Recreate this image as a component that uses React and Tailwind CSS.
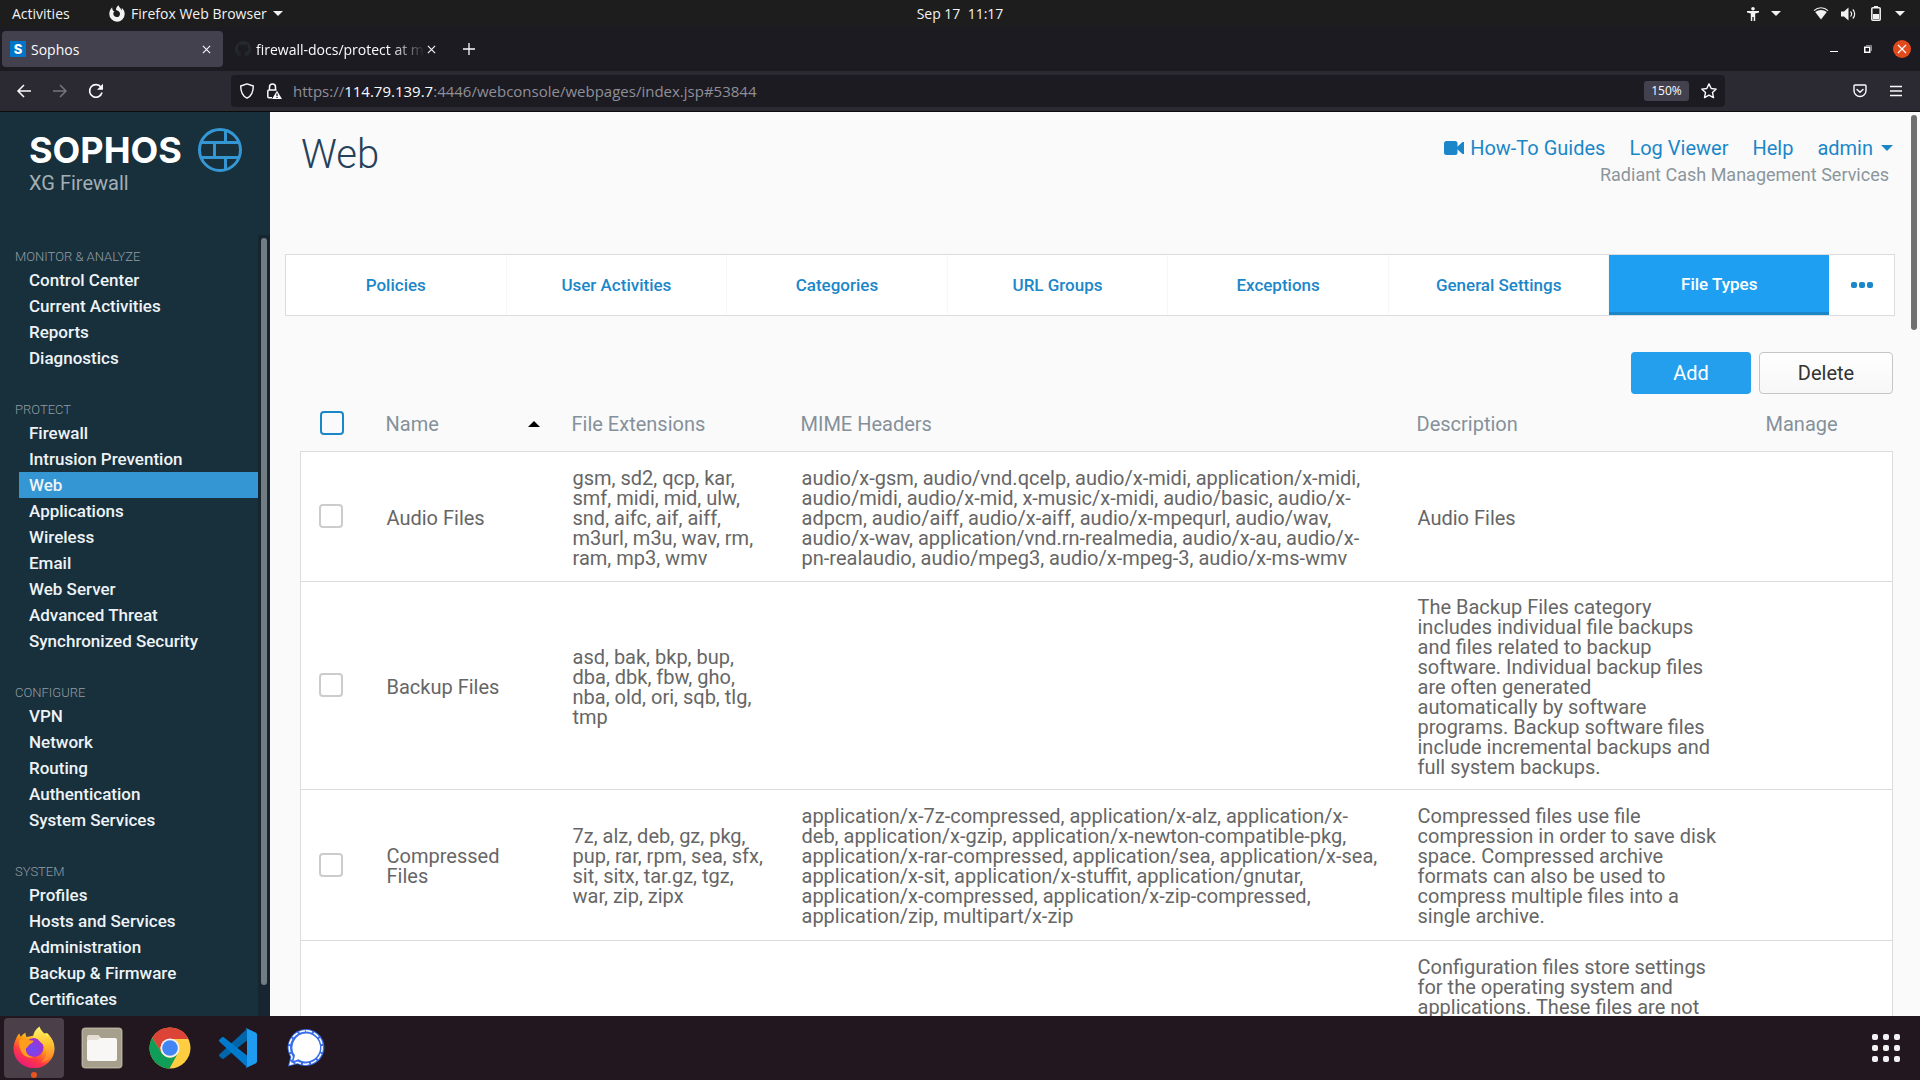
import React from "react";

const UI = "font-['Open_Sans','Noto_Sans',sans-serif]";

function Caret({ className }) {
  return (
    <svg viewBox="0 0 10 5" className={className} fill="currentColor" aria-hidden="true">
      <path d="M0 0h10L5 5z" />
    </svg>
  );
}

function FirefoxSymbol() {
  return (
    <svg viewBox="0 0 16 17" className="h-[17px] w-4" aria-hidden="true">
      <path fill="#f2f2f2" d="M3.2 2.2C1.400 4 .3 6.300.3 8.900A7.700 7.700 0 0 0 15.700 9c0-2.700-1.200-4.800-3-6 .2 1 .2 1.800 0 2.500C12 3.200 9.800 2.400 9.700.2 7.600 1.300 7 3.400 7 4.900c1.900.3 3.900 1.500 4 3.800.1 2-1.400 3.400-3.200 3.400-2 0-3.500-1.400-3.500-3.300 0-1 .5-1.700 1.200-2.100C4 6 3.100 4.400 3.200 2.200z" />
    </svg>
  );
}

function TopBar() {
  return (
    <header className={`${UI} grid h-[27px] shrink-0 grid-cols-3 items-center bg-[#1d1d1d] text-sm text-[#f2f2f2]`}>
      <div className="flex items-center pl-3">
        <button className="w-[62px] text-left">Activities</button>
        <button className="ml-[35px] flex items-center gap-1.5 whitespace-nowrap">
          <FirefoxSymbol />
          Firefox Web Browser
          <Caret className="h-[5px] w-2.5" />
        </button>
      </div>
      <div className="text-center">Sep 17&nbsp; 11:17</div>
      <div className="flex items-center justify-end pr-[15px]">
        <svg viewBox="0 0 12 14" className="h-3.5 w-3" fill="currentColor" aria-hidden="true">
          <circle cx="6" cy="1.800" r="1.800" />
          <path d="M0 4h12v1.500L8.200 6.500V14H6.700v-4H5.300v4H3.800V6.500L0 5.500z" />
        </svg>
        <Caret className="ml-3 h-[5px] w-2.5" />
        <svg viewBox="0 0 16 13" className="ml-8 h-[13px] w-4" aria-hidden="true">
          <path d="M1 3.600C5-.2 11-.2 15 3.600" fill="none" stroke="currentColor" strokeWidth="1.200" />
          <path d="M2.200 5C5.500 2.200 10.500 2.200 13.800 5L8 12.500z" fill="currentColor" />
        </svg>
        <svg viewBox="0 0 16 14" className="ml-3 h-3.5 w-4" aria-hidden="true">
          <path d="M0 4.500h3L7.500.5v13L3 9.500H0z" fill="currentColor" />
          <path d="M9.500 4.500c1.300 1.400 1.300 3.600 0 5M11.800 2.500c2.500 2.500 2.500 6.500 0 9" fill="none" stroke="currentColor" strokeWidth="1.200" />
        </svg>
        <svg viewBox="0 0 10 15" className="ml-3.5 h-[15px] w-2.5" aria-hidden="true">
          <rect x=".8" y="1.800" width="8.400" height="12.400" rx="1" fill="none" stroke="currentColor" strokeWidth="1.500" />
          <path d="M3 0h4v2H3zM2 8h6v5H2z" fill="currentColor" />
        </svg>
        <Caret className="ml-3.5 h-[5px] w-2.5" />
      </div>
    </header>
  );
}

function Cross({ className }) {
  return (
    <svg viewBox="0 0 10 10" className={className} stroke="currentColor" strokeWidth="1.200" aria-hidden="true">
      <path d="M1 1l8 8M9 1L1 9" />
    </svg>
  );
}

function TabStrip() {
  return (
    <div className={`${UI} flex h-11 shrink-0 items-center bg-[#1c1b22] pl-0.5 text-sm text-[#fbfbfe]`}>
      <div className="flex h-9 w-[221px] items-center rounded bg-[#42414d] pr-3 pl-2">
        <span className="flex size-4 items-center justify-center bg-[#0075c9] font-['Inter',sans-serif] text-[13px] leading-4 font-extrabold text-white">S</span>
        <span className="ml-[5px] flex-1 pt-0.5">Sophos</span>
        <button aria-label="Close Sophos tab"><Cross className="size-[9px]" /></button>
      </div>
      <div className="ml-3 flex h-9 w-[204px] items-center">
        <svg viewBox="0 0 16 16" className="size-4 shrink-0" fill="#24292e" aria-hidden="true">
          <path d="M8 0a8 8 0 0 0-2.530 15.590c.4.070.55-.17.55-.38v-1.340c-2.220.48-2.690-1.070-2.690-1.070-.36-.92-.89-1.170-.89-1.170-.73-.5.050-.49.050-.49.810.060 1.230.83 1.230.83.720 1.230 1.880.87 2.340.67.070-.52.280-.87.510-1.070-1.780-.2-3.640-.89-3.640-3.950 0-.87.310-1.590.82-2.150-.08-.2-.36-1.020.080-2.120 0 0 .67-.21 2.200.82a7.600 7.600 0 0 1 4 0c1.530-1.040 2.200-.82 2.200-.82.44 1.100.16 1.920.080 2.120.51.56.82 1.270.82 2.150 0 3.070-1.870 3.750-3.650 3.950.29.25.54.73.54 1.480v2.190c0 .21.150.46.550.38A8 8 0 0 0 8 0z" />
        </svg>
        <span className="ml-[5px] w-[169px] overflow-hidden mask-r-from-80% pt-0.5 whitespace-nowrap">firewall-docs/protect at main</span>
        <button className="ml-0.5" aria-label="Close firewall-docs tab"><Cross className="size-[9px]" /></button>
      </div>
      <button className="ml-6" aria-label="New tab">
        <svg viewBox="0 0 12 12" className="size-3" stroke="currentColor" strokeWidth="1.300" aria-hidden="true"><path d="M6 0v12M0 6h12" /></svg>
      </button>
      <div className="ml-auto flex items-center pr-[9px]">
        <button aria-label="Minimize" className="mt-1 h-px w-2 bg-white" />
        <button aria-label="Restore" className="ml-[26px]">
          <svg viewBox="0 0 8 8" className="size-2" fill="none" aria-hidden="true">
            <path d="M2 .5h5.500V6" stroke="#8a8a90" />
            <rect x=".75" y="2.250" width="5" height="5" stroke="#fff" strokeWidth="1.500" />
          </svg>
        </button>
        <button aria-label="Close window" className="ml-[21px] flex size-[18px] items-center justify-center rounded-full bg-[#e2491b] text-white">
          <Cross className="size-2.5" />
        </button>
      </div>
    </div>
  );
}

function Toolbar() {
  return (
    <div className={`${UI} flex h-[41px] shrink-0 items-center border-b border-[#0c0c0d] bg-[#2b2a33] text-[#fbfbfe]`}>
      <div className="flex w-[231px] shrink-0 items-center gap-5 pl-4">
        {[
          ["Back", "M15 8H2M8 2L2 8l6 6", ""],
          ["Forward", "M1 8h13M8 2l6 6-6 6", "text-[#75747c]"],
        ].map(([label, d, tone]) => (
          <button key={label} aria-label={label} className={tone}>
            <svg viewBox="0 0 16 16" className="size-4" fill="none" stroke="currentColor" strokeWidth="1.500" aria-hidden="true"><path d={d} /></svg>
          </button>
        ))}
        <button aria-label="Reload">
          <svg viewBox="0 0 16 16" className="size-4" aria-hidden="true">
            <path d="M14 9.500A6.300 6.300 0 1 1 13 4.200" fill="none" stroke="currentColor" strokeWidth="1.600" />
            <path d="M15 .8v6H9z" fill="currentColor" />
          </svg>
        </button>
      </div>
      <div className="flex h-8 flex-1 items-center rounded bg-[#1c1b22] pr-2 pl-2">
        <svg viewBox="0 0 16 16" className="size-4" fill="none" stroke="currentColor" strokeWidth="1.400" aria-hidden="true">
          <path d="M8 .9L14.300 3c0 5.500-1.500 10-6.300 12.200C3.200 13 1.700 8.500 1.700 3z" strokeLinejoin="round" />
        </svg>
        <svg viewBox="0 0 16 16" className="ml-[11px] size-4" aria-hidden="true">
          <path d="M6 14.800H3a1.200 1.200 0 0 1-1.200-1.200V8.200A1.200 1.200 0 0 1 3 7h7.500M3.500 7V4a3 3 0 0 1 6 0v3" fill="none" stroke="currentColor" strokeWidth="1.500" />
          <path d="M11 7.800L16 16H6z" fill="currentColor" />
          <path d="M11 10.500v2.700M11 14v1" stroke="#1c1b22" strokeWidth="1.300" />
        </svg>
        <div className="ml-[11px] flex-1 text-[15px] leading-5 text-[#8f8f98]">
          https://<span className="text-[#fbfbfe]">114.79.139.7</span>:4446/webconsole/webpages/index.jsp#53844
        </div>
        <button className="h-5 w-[45px] rounded-[3px] bg-[#42414d] text-xs">150%</button>
        <button aria-label="Bookmark" className="ml-3">
          <svg viewBox="0 0 16 16" className="size-4" fill="none" stroke="currentColor" strokeWidth="1.400" strokeLinejoin="round" aria-hidden="true">
            <path d="M8 .9l2.200 4.600 5 .6-3.700 3.500 1 5L8 12.200l-4.500 2.400 1-5L.8 6.100l5-.6z" />
          </svg>
        </button>
      </div>
      <div className="flex w-[195px] shrink-0 items-center justify-end gap-[23px] pr-[18px]">
        <button aria-label="Save to Pocket">
          <svg viewBox="0 0 14 14" className="size-3.5" fill="none" stroke="currentColor" strokeWidth="1.400" strokeLinecap="round" strokeLinejoin="round" aria-hidden="true">
            <path d="M2 1h10a1 1 0 0 1 1 1v4.500a6 6 0 0 1-12 0V2a1 1 0 0 1 1-1zM4 5.500l3 2.800 3-2.800" />
          </svg>
        </button>
        <button aria-label="Menu">
          <svg viewBox="0 0 12 12" className="size-3" stroke="currentColor" strokeWidth="1.300" aria-hidden="true"><path d="M0 1.500h12M0 6h12M0 10.500h12" /></svg>
        </button>
      </div>
    </div>
  );
}

const NAV = [
  ["MONITOR & ANALYZE", ["Control Center", "Current Activities", "Reports", "Diagnostics"]],
  ["PROTECT", ["Firewall", "Intrusion Prevention", "Web", "Applications", "Wireless", "Email", "Web Server", "Advanced Threat", "Synchronized Security"]],
  ["CONFIGURE", ["VPN", "Network", "Routing", "Authentication", "System Services"]],
  ["SYSTEM", ["Profiles", "Hosts and Services", "Administration", "Backup & Firmware", "Certificates"]],
];

function Sidebar() {
  return (
    <aside className="flex w-[270px] shrink-0 flex-col bg-[#182f3c]">
      <div className="h-[123px] shrink-0 pt-[15px] pl-[29px]">
        <div className="flex items-center gap-[15px]">
          <span className="w-[154px] font-['Inter',sans-serif] text-4xl leading-[46px] font-bold whitespace-nowrap text-white">SOPHOS</span>
          <svg viewBox="0 0 44 44" className="size-11" fill="none" stroke="#3596d4" strokeWidth="3" aria-hidden="true">
            <circle cx="22" cy="22" r="20.500" />
            <path d="M4 14.500h36M4 29.500h36M27.500 2v12.500M16.500 14.500v15M27.500 29.500V42" />
          </svg>
        </div>
        <div className="text-xl leading-5 text-[#a3afb5]">XG Firewall</div>
      </div>
      <div className="flex min-h-0 flex-1 overflow-hidden">
        <nav className="flex-1">
          {NAV.map(([title, items]) => (
            <section key={title} className="pt-3 pb-[17px]">
              <h2 className="pl-[15px] text-[13px] leading-5 font-light text-[#929da3]">{title}</h2>
              <ul>
                {items.map((item) => (
                  <li key={item} className="pl-[19px]">
                    <a href="#" className={`block h-[26px] pl-2.5 text-[17px] leading-[26px] font-medium text-[#edf3f6] ${item === "Web" ? "bg-[#3596d4]" : ""}`}>{item}</a>
                  </li>
                ))}
              </ul>
            </section>
          ))}
        </nav>
        <div className="w-3 bg-[#162530] px-[3px] pt-[3px]">
          <div className="h-[747px] rounded-full bg-[#727d83]" />
        </div>
      </div>
    </aside>
  );
}

const TABS = ["Policies", "User Activities", "Categories", "URL Groups", "Exceptions", "General Settings", "File Types"];

const ROWS = [
  {
    name: ["Audio Files"],
    ext: ["gsm, sd2, qcp, kar,", "smf, midi, mid, ulw,", "snd, aifc, aif, aiff,", "m3url, m3u, wav, rm,", "ram, mp3, wmv"],
    mime: [
      "audio/x-gsm, audio/vnd.qcelp, audio/x-midi, application/x-midi,",
      "audio/midi, audio/x-mid, x-music/x-midi, audio/basic, audio/x-",
      "adpcm, audio/aiff, audio/x-aiff, audio/x-mpequrl, audio/wav,",
      "audio/x-wav, application/vnd.rn-realmedia, audio/x-au, audio/x-",
      "pn-realaudio, audio/mpeg3, audio/x-mpeg-3, audio/x-ms-wmv",
    ],
    desc: ["Audio Files"],
    height: "h-[130px]",
  },
  {
    name: ["Backup Files"],
    ext: ["asd, bak, bkp, bup,", "dba, dbk, fbw, gho,", "nba, old, ori, sqb, tlg,", "tmp"],
    mime: [],
    desc: [
      "The Backup Files category",
      "includes individual file backups",
      "and files related to backup",
      "software. Individual backup files",
      "are often generated",
      "automatically by software",
      "programs. Backup software files",
      "include incremental backups and",
      "full system backups.",
    ],
    height: "h-[208px]",
  },
  {
    name: ["Compressed", "Files"],
    ext: ["7z, alz, deb, gz, pkg,", "pup, rar, rpm, sea, sfx,", "sit, sitx, tar.gz, tgz,", "war, zip, zipx"],
    mime: [
      "application/x-7z-compressed, application/x-alz, application/x-",
      "deb, application/x-gzip, application/x-newton-compatible-pkg,",
      "application/x-rar-compressed, application/sea, application/x-sea,",
      "application/x-sit, application/x-stuffit, application/gnutar,",
      "application/x-compressed, application/x-zip-compressed,",
      "application/zip, multipart/x-zip",
    ],
    desc: ["Compressed files use file", "compression in order to save disk", "space. Compressed archive", "formats can also be used to", "compress multiple files into a", "single archive."],
    height: "h-[151px]",
  },
  {
    name: [],
    ext: [],
    mime: [],
    desc: ["Configuration files store settings", "for the operating system and", "applications. These files are not"],
    height: "h-[210px]",
    top: true,
  },
];

function Lines({ lines }) {
  return lines.map((line) => (
    <span key={line} className="block whitespace-nowrap">{line}</span>
  ));
}

function FileTypesTable() {
  return (
    <table className="w-full table-fixed border-collapse text-left text-xl leading-5 text-[#666]">
      <colgroup>
        <col className="w-[69px]" />
        <col className="w-[186px]" />
        <col className="w-[229px]" />
        <col />
        <col className="w-[349px]" />
        <col className="w-[143px]" />
      </colgroup>
      <thead className="text-[#85919a]">
        <tr className="h-[57px]">
          <th className="pt-0.5 pl-[19px]">
            <input type="checkbox" aria-label="Select all" className="block size-6 appearance-none rounded border-2 border-[#1b87c9]" />
          </th>
          <th className="px-4 pt-1 font-normal">
            <button className="flex w-full items-center justify-between">
              Name
              <svg viewBox="0 0 12 6" className="h-1.5 w-3" fill="#000" aria-hidden="true"><path d="M6 0l6 6H0z" /></svg>
            </button>
          </th>
          <th className="px-4 pt-1 font-normal">File Extensions</th>
          <th className="px-4 pt-1 font-normal">MIME Headers</th>
          <th className="px-4 pt-1 font-normal">Description</th>
          <th className="px-4 pt-1 font-normal">Manage</th>
        </tr>
      </thead>
      <tbody className="border border-[#dadcdd] bg-white">
        {ROWS.map((row, i) => (
          <tr key={i} className={`${row.height} border-b border-[#dadcdd]`}>
            <td className="pl-[18px]">
              <input type="checkbox" aria-label={row.name.join(" ") || "Select row"} className="block size-6 appearance-none rounded border-2 border-[#ccc] bg-white" />
            </td>
            <td className="px-[17px] pt-[3px]"><Lines lines={row.name} /></td>
            <td className="px-[17px] pt-[3px]"><Lines lines={row.ext} /></td>
            <td className="px-[17px] pt-[3px]"><Lines lines={row.mime} /></td>
            <td className={`px-[17px] ${row.top ? "pt-4 align-top" : "pt-[3px]"}`}><Lines lines={row.desc} /></td>
            <td />
          </tr>
        ))}
      </tbody>
    </table>
  );
}

function Main() {
  return (
    <main className="flex min-w-0 flex-1 overflow-hidden bg-[#fafafa]">
      <div className="min-w-0 flex-1 pr-4">
        <div className="flex h-[142px] justify-between pr-0.5 pl-[31px]">
          <h1 className="pt-5 text-[40px] leading-[46px] font-light text-[#26415a]">Web</h1>
          <div className="pt-6 text-right">
            <div className="flex items-center justify-end gap-6 text-xl leading-6 text-[#1b87c9]">
              <a href="#" className="flex items-center gap-1.5">
                <svg viewBox="0 0 20 14" className="h-3.5 w-5" fill="currentColor" aria-hidden="true">
                  <rect width="13.500" height="14" rx="2.500" />
                  <path d="M13 6l5.500-5H20v12h-1.500L13 8z" />
                </svg>
                How-To Guides
              </a>
              <a href="#">Log Viewer</a>
              <a href="#">Help</a>
              <button className="flex items-center gap-2">admin <Caret className="h-1.5 w-3" /></button>
            </div>
            <div className="pt-[3px] pr-1 text-lg leading-6 text-[#8b969d]">Radiant Cash Management Services</div>
          </div>
        </div>
        <nav className="ml-[15px] flex h-[62px] border border-[#dadcdd] bg-white text-[17px] font-medium">
          {TABS.map((tab) => (
            <a
              key={tab}
              href="#"
              className={
                tab === "File Types"
                  ? "flex flex-1 items-center justify-center border-b-3 border-[#1b87c9] bg-[#1e9ff2] pt-0.5 text-white"
                  : "flex flex-1 items-center justify-center border-r border-[#f7f7f7] pt-px text-[#1b87c9]"
              }
            >
              {tab}
            </a>
          ))}
          <button aria-label="More tabs" className="flex w-[65px] items-center justify-center gap-0.5 text-[#1b87c9]">
            {[0, 1, 2].map((n) => <span key={n} className="size-1.5 rounded-[2px] bg-current" />)}
          </button>
        </nav>
        <div className="ml-[30px] pr-0.5">
          <div className="flex justify-end gap-2 pt-9 text-xl">
            <button className="h-[42px] w-[120px] rounded bg-[#239fee] text-white">Add</button>
            <button className="h-[42px] w-[134px] rounded border border-[#c5c5c5] bg-linear-to-b from-white to-[#f7f7f7] text-[#333]">Delete</button>
          </div>
          <FileTypesTable />
        </div>
      </div>
      <div className="w-[9px] shrink-0 pt-[3px] pr-[3px]">
        <div className="h-[215px] rounded-full bg-[#6f6f6f]" />
      </div>
    </main>
  );
}

function FirefoxLogo() {
  return (
    <svg viewBox="0 0 42 42" className="size-[42px]" aria-hidden="true">
      <defs>
        <linearGradient id="ffBody" x1=".8" y1=".1" x2=".2" y2="1">
          <stop offset="0" stopColor="#fff44f" />
          <stop offset=".35" stopColor="#ff980e" />
          <stop offset=".65" stopColor="#ff3647" />
          <stop offset="1" stopColor="#e31587" />
        </linearGradient>
        <linearGradient id="ffFlame" x1=".5" y1="0" x2=".6" y2="1">
          <stop offset="0" stopColor="#fff36b" />
          <stop offset=".5" stopColor="#ffc22e" />
          <stop offset="1" stopColor="#ff7a2f" />
        </linearGradient>
        <radialGradient id="ffGlobe" cx=".45" cy=".6" r=".6">
          <stop offset="0" stopColor="#6e4bf2" />
          <stop offset="1" stopColor="#a22fd0" />
        </radialGradient>
      </defs>
      <path fill="url(#ffBody)" d="M3 13c1-3 2.200-4.500 3.500-5.500.2 1.500.7 2.500 1.500 3.300 1-1.800 2.500-3.200 4.500-4 0 1.500.3 3 1.200 4.200L34 7c4 4 7.500 9 7.500 15.500A20.500 19.500 0 0 1 .5 23C.5 19 1.500 16 3 13z" />
      <circle cx="21" cy="21.500" r="9.500" fill="url(#ffGlobe)" />
      <path fill="url(#ffFlame)" d="M26.500.5c1.500 5 6 7.500 8.500 10.500.2-1 .2-2-.1-3 4 4 6.100 9 6.100 14 0 8-6 13.500-13 14.500 5-4 6.500-9.500 4.500-14.500-1.500-3.500-5-5-7.500-8.500-1-1.500-5-1.500-5-2 .3-4.500 2.500-8.500 6.500-11z" />
      <path fill="#ff9d1c" d="M6 15c3-2.500 7-2.500 9.500-1 2 .5 4 .5 5.200.8-.5 2-2.700 2.800-4.200 3.700-1.500 1-1.500 3-3.500 3.500-1 5 3 9 8 9-6 2-12-1.500-13.500-7C6.500 20.500 6 18 6 15z" />
    </svg>
  );
}

function FilesLogo() {
  return (
    <svg viewBox="0 0 42 42" className="size-[42px]" aria-hidden="true">
      <rect x=".5" y=".5" width="41" height="41" rx="4" fill="#a69f8b" />
      <rect x="1.500" y="1.500" width="39" height="39" rx="3" fill="none" stroke="#b9b3a2" />
      <path d="M6 10a2 2 0 0 1 2-2h9.500l3 3.500H34v8H6z" fill="#e3dfd5" />
      <path d="M6 15a2 2 0 0 1 2-2h8.500l3-2H34a2 2 0 0 1 2 2v19a2 2 0 0 1-2 2H8a2 2 0 0 1-2-2z" fill="#f8f7f5" />
    </svg>
  );
}

function ChromeLogo() {
  return (
    <svg viewBox="0 0 42 42" className="size-[42px]" aria-hidden="true">
      <circle cx="21" cy="21" r="20.500" fill="#ffcd40" />
      <path d="M3.200 10.800A20.500 20.500 0 0 1 39.500 12H21a9.500 9.500 0 0 0-8.500 13.500z" fill="#db4437" />
      <path d="M3.200 10.800L12.800 26A9.500 9.500 0 0 0 28.500 27L20.500 41.500A20.500 20.500 0 0 1 3.200 10.800z" fill="#0f9d58" />
      <circle cx="21" cy="21" r="9.600" fill="#f1f1f1" />
      <circle cx="21" cy="21" r="7.800" fill="#4285f4" />
    </svg>
  );
}

function CodeLogo() {
  return (
    <svg viewBox="0 0 40 40" className="size-10" aria-hidden="true">
      <path d="M29 .8L1.500 26.200c-.8.7-.8 1.700 0 2.400l2.200 2c.6.500 1.400.6 2.100.1L29 12.500z" fill="#0065a9" />
      <path d="M29 39.200L1.500 13.800c-.8-.7-.8-1.700 0-2.400l2.200-2c.6-.5 1.400-.6 2.100-.1L29 27.500z" fill="#007acc" />
      <path d="M29 39.500c-.9.400-1.500.2-2.200-.4.800.8 2.200.2 2.200-1V2C29 .8 27.600.2 26.800 1c.7-.7 1.300-.9 2.200-.5l8.600 4.100c.9.400 1.400 1.300 1.400 2.200v26.500c0 .9-.5 1.800-1.400 2.200z" fill="#1f9cf0" />
    </svg>
  );
}

function SignalLogo() {
  return (
    <svg viewBox="0 0 40 40" className="size-10" aria-hidden="true">
      <path d="M20 1a18.500 18.500 0 1 1-8.500 35L2 38.500l2.300-9.500A18.500 18.500 0 0 1 20 1z" fill="#3a6ee8" />
      <path d="M20 2.800a16.700 16.700 0 1 1-8.200 31.500L4.300 36.200l1.800-7.400A16.700 16.700 0 0 1 20 2.800z" fill="none" stroke="#fff" strokeWidth="1.500" strokeDasharray="6 2" />
      <path d="M20 5.500a14 14 0 1 1-7.500 25.800L7.500 33l1.500-5.500A14 14 0 0 1 20 5.500z" fill="#fff" />
    </svg>
  );
}

function Dock() {
  const apps = [
    ["Files", FilesLogo],
    ["Chrome", ChromeLogo],
    ["Code", CodeLogo],
    ["Signal", SignalLogo],
  ];
  return (
    <footer className="flex h-16 shrink-0 items-center bg-[#22161f] pl-1">
      <button aria-label="Firefox" className="flex h-15 w-15 flex-col items-center rounded bg-[#4b4049] pt-2">
        <FirefoxLogo />
        <span className="mt-1 size-1.5 rounded-full bg-[#e95420]" />
      </button>
      {apps.map(([label, Logo]) => (
        <button key={label} aria-label={label} className="ml-2 flex h-15 w-15 items-center justify-center"><Logo /></button>
      ))}
      <button aria-label="Show applications" className="mr-5 ml-auto grid grid-cols-3 gap-[5px]">
        {Array.from({ length: 9 }, (_, n) => <span key={n} className="size-1.5 rounded-[2px] bg-[#f2f2f2]" />)}
      </button>
    </footer>
  );
}

export default function App() {
  return (
    <div className="flex h-screen flex-col overflow-hidden font-['Roboto','Liberation_Sans',sans-serif]">
      <TopBar />
      <TabStrip />
      <Toolbar />
      <div className="flex min-h-0 flex-1">
        <Sidebar />
        <Main />
      </div>
      <Dock />
    </div>
  );
}
